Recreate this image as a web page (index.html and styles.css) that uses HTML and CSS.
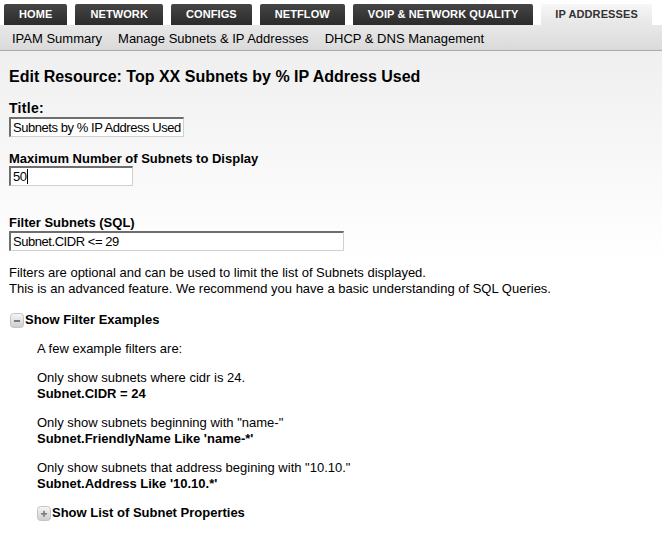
FILE: index.html
```html
<!DOCTYPE html>
<html lang="en">
<head>
<meta charset="utf-8">
<title>Edit Resource</title>
<link rel="stylesheet" href="styles.css">
</head>
<body>
<div class="tabs">
  <a class="tab">HOME</a>
  <a class="tab">NETWORK</a>
  <a class="tab">CONFIGS</a>
  <a class="tab">NETFLOW</a>
  <a class="tab">VOIP &amp; NETWORK QUALITY</a>
  <a class="tab active">IP ADDRESSES</a>
</div>
<div class="subnav">
  <a>IPAM Summary</a>
  <a>Manage Subnets &amp; IP Addresses</a>
  <a>DHCP &amp; DNS Management</a>
</div>
<div class="content">
  <h1 class="heading">Edit Resource: Top XX Subnets by % IP Address Used</h1>

  <div class="label label-title">Title:</div>
  <input class="field field-title" type="text" value="Subnets by % IP Address Used">

  <div class="label label-max">Maximum Number of Subnets to Display</div>
  <div class="field-wrap">
    <input class="field field-max" type="text" value="50">
    <span class="caret"></span>
  </div>

  <div class="label label-filter">Filter Subnets (SQL)</div>
  <input class="field field-filter" type="text" value="Subnet.CIDR &lt;= 29">

  <p class="note">Filters are optional and can be used to limit the list of Subnets displayed.<br>This is an advanced feature. We recommend you have a basic understanding of SQL Queries.</p>

  <div class="toggle toggle-examples">
    <svg class="toggle-icon" width="14" height="15" viewBox="0 0 14 15">
      <defs>
        <linearGradient id="g1" x1="0" y1="0" x2="0" y2="1">
          <stop offset="0" stop-color="#f6f6f6"/>
          <stop offset="1" stop-color="#cdcdcd"/>
        </linearGradient>
      </defs>
      <rect x="0.5" y="0.5" width="13" height="14" rx="3" fill="url(#g1)" stroke="#c4c4c4"/>
      <rect x="4" y="7" width="6" height="2" fill="#7a7a7a"/>
    </svg>
    <span>Show Filter Examples</span>
  </div>

  <div class="examples">
    <p>A few example filters are:</p>
    <p>Only show subnets where cidr is 24.<br><b>Subnet.CIDR = 24</b></p>
    <p>Only show subnets beginning with "name-"<br><b>Subnet.FriendlyName Like 'name-*'</b></p>
    <p>Only show subnets that address begining with "10.10."<br><b>Subnet.Address Like '10.10.*'</b></p>
    <div class="toggle">
      <svg class="toggle-icon" width="14" height="15" viewBox="0 0 14 15">
        <defs>
          <linearGradient id="g2" x1="0" y1="0" x2="0" y2="1">
            <stop offset="0" stop-color="#f6f6f6"/>
            <stop offset="1" stop-color="#cdcdcd"/>
          </linearGradient>
        </defs>
        <rect x="0.5" y="0.5" width="13" height="14" rx="3" fill="url(#g2)" stroke="#c4c4c4"/>
        <rect x="4" y="7" width="6" height="1.6" fill="#7a7a7a"/>
        <rect x="6.2" y="4.8" width="1.6" height="6" fill="#7a7a7a"/>
      </svg>
      <span>Show List of Subnet Properties</span>
    </div>
  </div>
</div>
</body>
</html>
```

FILE: styles.css
```css
html, body {
  margin: 0;
  padding: 0;
  background: #ffffff;
  font-family: "Liberation Sans", Arial, sans-serif;
  color: #000;
}

.tabs {
  display: flex;
  gap: 8px;
  padding: 4px 0 0 4px;
  background: #fff;
}

.tab {
  display: block;
  height: 21px;
  line-height: 21px;
  padding: 0 15px;
  font-size: 11px;
  font-weight: bold;
  letter-spacing: 0.1px;
  color: #fff;
  background: linear-gradient(#454545, #2b2b2b);
  border-radius: 2px 2px 0 0;
}

.tab.active {
  color: #333;
  background: linear-gradient(#f7f7f7, #e6e6e6);
  padding: 0 14px;
}

.subnav {
  display: flex;
  gap: 16px;
  height: 25px;
  padding-left: 12px;
  align-items: center;
  background: linear-gradient(#e8e8e8, #dadada);
  border-bottom: 1px solid #aaaaaa;
  font-size: 13px;
  line-height: 15px;
}

.subnav a {
  color: #000;
  padding-top: 1px;
}

.content {
  padding: 0 9px 20px 9px;
  background: linear-gradient(#efefef 0, #f4f4f4 60px, #ffffff 210px);
  min-height: 470px;
  overflow: hidden;
}

.heading {
  margin: 16px 0 0 0;
  font-size: 16px;
  line-height: 19px;
  font-weight: bold;
}

.label {
  font-size: 13px;
  line-height: 15px;
  font-weight: bold;
}

.label-title {
  margin-top: 14px;
  font-size: 14px;
  line-height: 17px;
  letter-spacing: 0.3px;
}

.label-max {
  margin-top: 14px;
}

.label-filter {
  margin-top: 29px;
}

.field-wrap {
  position: relative;
  width: 124px;
}

.caret {
  position: absolute;
  left: 18px;
  top: 3px;
  width: 1px;
  height: 15px;
  background: #000;
}

.field {
  display: block;
  box-sizing: border-box;
  height: 20px;
  margin: 0;
  padding: 0 2px;
  font-family: "Liberation Sans", Arial, sans-serif;
  font-size: 13px;
  letter-spacing: -0.45px;
  color: #000;
  background: #fff;
  border-style: solid;
  border-width: 2px 1px 1px 2px;
  border-color: #6e6e6e #d0d0d0 #d0d0d0 #6e6e6e;
  outline: none;
}

.field-title { width: 175px; }
.field-max { width: 124px; }
.field-filter { width: 335px; margin-top: 1px; }

.note {
  margin: 14px 0 0 0;
  font-size: 13px;
  line-height: 16px;
}

.toggle {
  display: flex;
  align-items: center;
  gap: 1px;
  font-size: 13px;
  line-height: 16px;
  font-weight: bold;
}

.toggle-examples {
  margin: 14px 0 0 1px;
}

.toggle-icon {
  display: block;
  flex: none;
  margin-top: 2px;
}

.examples {
  padding-left: 28px;
  font-size: 13px;
  line-height: 16px;
}

.examples p {
  margin: 13px 0 0 0;
}

.examples .toggle {
  margin-top: 12px;
}
```
